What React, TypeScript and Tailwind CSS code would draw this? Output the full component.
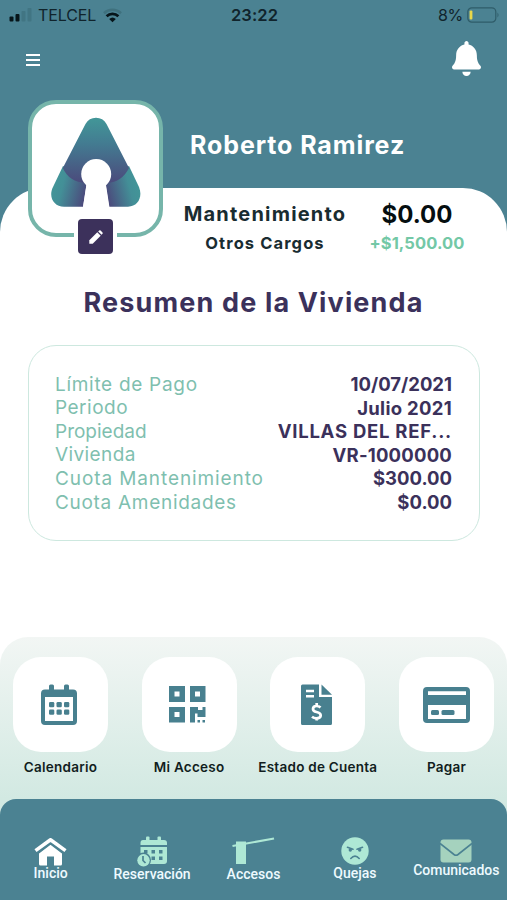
import React from 'react';
import { FaBell } from 'react-icons/fa';

interface DetailProps {
  label: string;
  value: string;
  labelClass: string;
  valueClass: string;
}

const details: DetailProps[] = [
  { label: 'Límite de Pago', value: '10/07/2021', labelClass: 'tracking-[0.7px]', valueClass: 'tracking-[0px]' },
  { label: 'Periodo', value: 'Julio 2021', labelClass: 'tracking-[0.5px]', valueClass: 'tracking-[0.3px]' },
  { label: 'Propiedad', value: 'VILLAS DEL REF...', labelClass: 'tracking-[0px]', valueClass: 'tracking-[0.75px]' },
  { label: 'Vivienda', value: 'VR-1000000', labelClass: 'tracking-[0.4px]', valueClass: 'tracking-[0.2px]' },
  { label: 'Cuota Mantenimiento', value: '$300.00', labelClass: 'tracking-[0.9px]', valueClass: 'tracking-[0px]' },
  { label: 'Cuota Amenidades', value: '$0.00', labelClass: 'tracking-[0.7px]', valueClass: 'tracking-[0px]' },
];

function StatusBar() {
  return (
    <div className="grid grid-cols-3 items-center h-[30px] pl-[9px] pr-[7px] text-[#10242c] text-[16px]">
      <div className="flex items-center">
        <svg width="23" height="14" viewBox="0 0 23 14">
          <rect x="0.5" y="8.5" width="4" height="5" rx="1" fill="#06151a" />
          <rect x="6.5" y="6" width="4" height="7.5" rx="1" fill="#06151a" />
          <rect x="12.5" y="3" width="4" height="10.5" rx="1" fill="#417583" />
          <rect x="18.5" y="0" width="4" height="13.5" rx="1" fill="#417583" />
        </svg>
        <span className="ml-[6px] tracking-[-0.1px]">TELCEL</span>
        <svg className="ml-[7px]" width="19" height="15" viewBox="0 0 19 15">
          <path d="M1 5.2a12.3 12.3 0 0 1 17 0" fill="none" stroke="#3f717e" strokeWidth="2.6" />
          <path d="M3.6 8.2a8.5 8.5 0 0 1 11.8 0" fill="none" stroke="#06151a" strokeWidth="2.8" />
          <path d="M6.2 11a4.8 4.8 0 0 1 6.6 0L9.5 14.3z" fill="#06151a" />
        </svg>
      </div>
      <div className="text-center font-semibold text-[16.5px] tracking-[0.1px]">23:22</div>
      <div className="flex items-center justify-end">
        <span className="tracking-[-0.3px]">8%</span>
        <svg className="ml-[4px]" width="33" height="16" viewBox="0 0 33 16">
          <rect x="0.8" y="0.8" width="28" height="14.4" rx="4" fill="none" stroke="#2f5c69" strokeWidth="1.2" />
          <rect x="2.6" y="3.4" width="2.8" height="9.2" rx="1" fill="#e9d84a" />
          <path d="M30.5 5.5q2 2.5 0 5z" fill="#2f5c69" />
        </svg>
      </div>
    </div>
  );
}

function Logo() {
  return (
    <svg width="90" height="90" viewBox="51 117 90 90">
      <defs>
        <linearGradient id="top" x1="0" y1="0" x2="0" y2="1">
          <stop offset="0" stopColor="#429798" />
          <stop offset="0.4" stopColor="#437b91" />
          <stop offset="1" stopColor="#4b4a7c" />
        </linearGradient>
        <linearGradient id="left" x1="0" y1="0.3" x2="1" y2="0.6">
          <stop offset="0" stopColor="#429798" />
          <stop offset="0.35" stopColor="#438f97" />
          <stop offset="1" stopColor="#4b4a7c" />
        </linearGradient>
        <linearGradient id="right" x1="1" y1="0.3" x2="0" y2="0.6">
          <stop offset="0" stopColor="#429798" />
          <stop offset="0.35" stopColor="#438f97" />
          <stop offset="1" stopColor="#4b4a7c" />
        </linearGradient>
      </defs>
      <path d="M63 166L53 187C48 197 54 206.7 64 206.7H83L86.5 184V176z" fill="url(#left)" />
      <path d="M129 166L139 187C143 197 138 206.7 128 206.7H109L105.5 184V176z" fill="url(#right)" />
      <path d="M85.5 124Q89 117.7 96 117.7T106.5 124L129 168Q122 182 107 183L96 176L86 183Q69 182 62.8 168z" fill="url(#top)" />
      <circle cx="96.2" cy="174" r="15" fill="#fff" />
      <path d="M86.8 180L86.5 185L83 207.5H109.5L106 185V180z" fill="#fff" />
    </svg>
  );
}

function Avatar() {
  return (
    <div className="relative shrink-0 w-[135px] h-[137px] -mt-[88px] ml-[28px] rounded-[28px] border-4 border-[#76b5aa] bg-white">
      <div className="flex justify-center pt-[13px]">
        <Logo />
      </div>
      <button className="absolute left-[42px] top-[111px] flex items-center justify-center w-[43px] h-[43px] bg-white">
        <span className="flex shrink-0 items-center justify-center w-[35px] h-[35px] rounded-[4px] bg-[#3c315b]">
          <svg width="14" height="14" viewBox="0 0 14 14" fill="#fff">
            <path d="M0.3 10.3L8.3 2.3L11.7 5.7L3.7 13.7H0.3z" />
            <path d="M9.2 1.5L10.2 0.5Q10.9 0 11.6 0.5L13.5 2.4Q14 3.1 13.5 3.8L12.5 4.8z" />
          </svg>
        </span>
      </button>
    </div>
  );
}

function CalendarIcon() {
  return (
    <svg className="mr-[3px]" width="36" height="42" viewBox="0 0 36 42" fill="#48808f">
      <rect x="8" y="0.5" width="5" height="9" rx="1.5" />
      <rect x="23" y="0.5" width="5" height="9" rx="1.5" />
      <path fillRule="evenodd" d="M4 5.5H32Q36 5.5 36 9.5V37Q36 41 32 41H4Q0 41 0 37V9.5Q0 5.5 4 5.5zM4 13V37H32V13z" />
      {[8, 15.5, 23].map((x) => (
        <g key={x}>
          <rect x={x} y="18" width="5.3" height="5.3" rx="1.3" />
          <rect x={x} y="25.5" width="5.3" height="5.3" rx="1.3" />
        </g>
      ))}
    </svg>
  );
}

function QrIcon() {
  return (
    <svg className="mr-[4px]" width="37" height="37" viewBox="0 0 37 37" fill="#48808f">
      <path fillRule="evenodd" d="M0 0H16V16H0zM5.5 5.5V10.5H10.5V5.5z" />
      <path fillRule="evenodd" d="M21 0H36.5V16H21zM26 5.5V10.5H31V5.5z" />
      <path fillRule="evenodd" d="M0 21H16V36.5H0zM5.5 26V31H10.5V26z" />
      <path d="M21 21H29V24H33.5V21H36.5V31H28.5V27.5H26V36.5H21z" />
      <path d="M28.5 34H31V36.5H28.5zM33.5 34H36V36.5H33.5z" />
    </svg>
  );
}

function InvoiceIcon() {
  return (
    <svg className="mr-[2px]" width="31" height="42" viewBox="0 0 31 42">
      <path d="M1.5 0.5H18V13H31V39.5Q31 41 29.5 41H1.5Q0 41 0 39.5V2Q0 0.5 1.5 0.5z" fill="#48808f" />
      <path d="M20.5 0.5L31 10.8H20.5z" fill="#48808f" />
      <path d="M5 7H13M5 12.2H13" stroke="#fff" strokeWidth="2.6" />
      <path d="M19.5 23.5Q18 22 15.5 22Q12 22 12 25Q12 27.3 15.5 28Q19.7 28.8 19.7 31.5Q19.7 34.3 15.5 34.3Q12.8 34.3 11 32.8M15.7 19V22M15.7 34V36.5" fill="none" stroke="#fff" strokeWidth="2.7" />
    </svg>
  );
}

function CardIcon() {
  return (
    <svg width="47" height="36" viewBox="0 0 47 36" fill="#48808f">
      <path fillRule="evenodd" d="M4 0H43Q47 0 47 4V32Q47 36 43 36H4Q0 36 0 32V4Q0 0 4 0zM5 4.2V8H43V4.2zM5 18V32H43V18z" />
      <rect x="8" y="23" width="8" height="5" rx="1.5" />
      <rect x="18.5" y="23" width="13" height="5" rx="1.5" />
    </svg>
  );
}

interface ActionProps {
  label: string;
  icon: React.ComponentType;
}

function QuickAction({ label, icon: Icon }: ActionProps) {
  return (
    <button className="flex flex-col items-center w-[95px]">
      <span className="flex items-center justify-center w-[95px] h-[95px] rounded-[28px] bg-white">
        <Icon />
      </span>
      <span className="mt-[5px] text-[13.5px] leading-5 font-semibold tracking-[0.25px] whitespace-nowrap text-[#111d20]">{label}</span>
    </button>
  );
}

function HomeIcon() {
  return (
    <svg width="33" height="28" viewBox="0 0 33 28">
      <path d="M5 15L16.5 6L28 15V26Q28 27.5 26.5 27.5H20V18.5H13V27.5H6.5Q5 27.5 5 26z" fill="#fff" />
      <path d="M3 15.5L16.500 5.300L30 15.500" fill="none" stroke="#4b8292" strokeWidth="2.400" />
      <path d="M1.500 12.600L16.500 1.800L31.500 12.600" fill="none" stroke="#fff" strokeWidth="3.600" strokeLinejoin="round" />
    </svg>
  );
}

function BookingIcon() {
  return (
    <svg width="31" height="31" viewBox="0 0 31 31" fill="#aee8d5">
      <rect x="9" y="0.5" width="3.5" height="6" rx="1" />
      <rect x="20.5" y="0.5" width="3.5" height="6" rx="1" />
      <path d="M6 4H27Q30 4 30 7V9H3.5V7Q3.5 4 6 4z" />
      <path d="M3.5 11H30V25Q30 28 27 28H3.5z" />
      <g fill="#4b8292">
        <path d="M7 14H10.5V17.5H7zM14.5 14H18V17.5H14.5zM22 14H25.5V17.5H22zM14.5 20.5H18V24H14.5zM22 20.5H25.5V24H22z" />
        <circle cx="6.5" cy="24" r="7.5" />
      </g>
      <circle cx="6.5" cy="24.3" r="6.2" />
      <path d="M6 20V24.5L8.5 27" fill="none" stroke="#4b8292" strokeWidth="1.7" />
    </svg>
  );
}

function GateIcon() {
  return (
    <svg width="43" height="28" viewBox="0 0 43 28" fill="#aee8d5">
      <path d="M4 4.5H14V27H4z" />
      <path d="M0.5 9L42 1.5" fill="none" stroke="#aee8d5" strokeWidth="2.2" />
    </svg>
  );
}

function AngryIcon() {
  return (
    <svg width="28" height="28" viewBox="0 0 28 28">
      <circle cx="14" cy="14" r="13.7" fill="#aee8d5" />
      <g fill="none" stroke="#4b8292" strokeWidth="1.6" strokeLinecap="round">
        <path d="M6.5 10.3L12 12.3M21.5 10.3L16 12.3" />
        <path d="M9.8 21.5Q14 16.8 18.2 21.5" />
      </g>
      <circle cx="9.3" cy="13" r="1.7" fill="#4b8292" />
      <circle cx="18.7" cy="13" r="1.7" fill="#4b8292" />
    </svg>
  );
}

function MailIcon() {
  return (
    <svg width="32" height="24" viewBox="0 0 32 24">
      <rect x="0.5" y="0.5" width="31" height="23" rx="3" fill="#a5d2be" />
      <path d="M0 4.5L14 15.5Q16 17 18 15.5L32 4.5" fill="none" stroke="#4b8292" strokeWidth="1.6" />
    </svg>
  );
}

interface TabProps {
  label: string;
  className: string;
  labelClass: string;
  icon: React.ComponentType;
}

const tabs: TabProps[] = [
  { label: 'Inicio', className: 'pt-[39px]', labelClass: '-mt-[3px]', icon: HomeIcon },
  { label: 'Reservación', className: 'pt-[37px]', labelClass: '-mt-[3px]', icon: BookingIcon },
  { label: 'Accesos', className: 'pt-[38px]', labelClass: '-mt-px', icon: GateIcon },
  { label: 'Quejas', className: 'pt-[38px]', labelClass: '-mt-[2px]', icon: AngryIcon },
  { label: 'Comunicados', className: 'pt-[40px]', labelClass: '-mt-[3px]', icon: MailIcon },
];

export default function App() {
  return (
    <div className="flex flex-col w-[507px] h-[900px] overflow-hidden bg-[#4b8292] [font-family:Inter,sans-serif]">
      <StatusBar />

      {/* Top navigation */}
      <div className="flex items-center justify-between h-[60px] pl-[26px] pr-[26px]">
        <button className="flex flex-col gap-[2.5px] w-[14px]">
          <span className="h-[2.5px] bg-white" />
          <span className="h-[2.5px] bg-white" />
          <span className="h-[2.5px] bg-white" />
        </button>
        <FaBell className="w-[29px] h-[35px] -mt-[3px] text-white" preserveAspectRatio="none" />
      </div>

      <div className="h-[98px] pt-[39px] pl-[190px]">
        <h1 className="text-[25px] leading-8 font-bold text-white tracking-[0.9px] whitespace-nowrap">Roberto Ramirez</h1>
      </div>

      <main className="flex flex-col flex-1 bg-white rounded-t-[44px]">
        <div className="flex h-[85px]">
          <Avatar />
          <div className="grid grid-cols-[204px_100px] content-start pt-[11px] text-center font-bold whitespace-nowrap text-[#192c31]">
            <span className="text-[20px] leading-[31px] tracking-[1.2px]">Mantenimiento</span>
            <span className="text-[24px] leading-[31px] text-[#050e10]">$0.00</span>
            <span className="text-[16.5px] leading-[27px] tracking-[1.1px]">Otros Cargos</span>
            <span className="text-[16.5px] leading-[27px] tracking-[0.1px] text-[#73c8a6]">+$1,500.00</span>
          </div>
        </div>

        <h2 className="h-[72px] pt-[13px] text-center text-[27px] leading-[34px] font-bold text-[#3b315b] tracking-[1.15px] whitespace-nowrap">Resumen de la Vivienda</h2>

        <div className="mx-[28px] w-[452px] h-[196px] rounded-[28px] border border-[#cde8df] pl-[26px] pr-[27px] pt-[27px]">
          {details.map((row) => (
            <div key={row.label} className="flex items-center justify-between h-[23.6px] whitespace-nowrap">
              <span className={`text-[19px] text-[#7fbfaf] ${row.labelClass}`}>{row.label}</span>
              <span className={`text-[18.5px] font-bold text-[#3b315b] ${row.valueClass}`}>{row.value}</span>
            </div>
          ))}
        </div>

        {/* Quick actions and bottom tabs */}
        <div className="flex-1 mt-[96px] rounded-t-[28px] bg-linear-to-b from-[#f2f6f4] from-0% to-[#d2e9e2] to-[162px]">
          <div className="flex justify-between h-[162px] pt-[20px] pl-[13px] pr-[13px]">
            <QuickAction label="Calendario" icon={CalendarIcon} />
            <QuickAction label="Mi Acceso" icon={QrIcon} />
            <QuickAction label="Estado de Cuenta" icon={InvoiceIcon} />
            <QuickAction label="Pagar" icon={CardIcon} />
          </div>
          <nav className="grid grid-cols-5 h-[101px] rounded-t-[16px] bg-[#4b8292]">
            {tabs.map(({ label, className, labelClass, icon: Icon }) => (
              <button key={label} className={`flex flex-col items-center ${className}`}>
                <Icon />
                <span className={`[font-family:Roboto,sans-serif] text-[14px] leading-5 font-medium text-[#eefaff] ${labelClass}`}>{label}</span>
              </button>
            ))}
          </nav>
        </div>
      </main>
    </div>
  );
}
